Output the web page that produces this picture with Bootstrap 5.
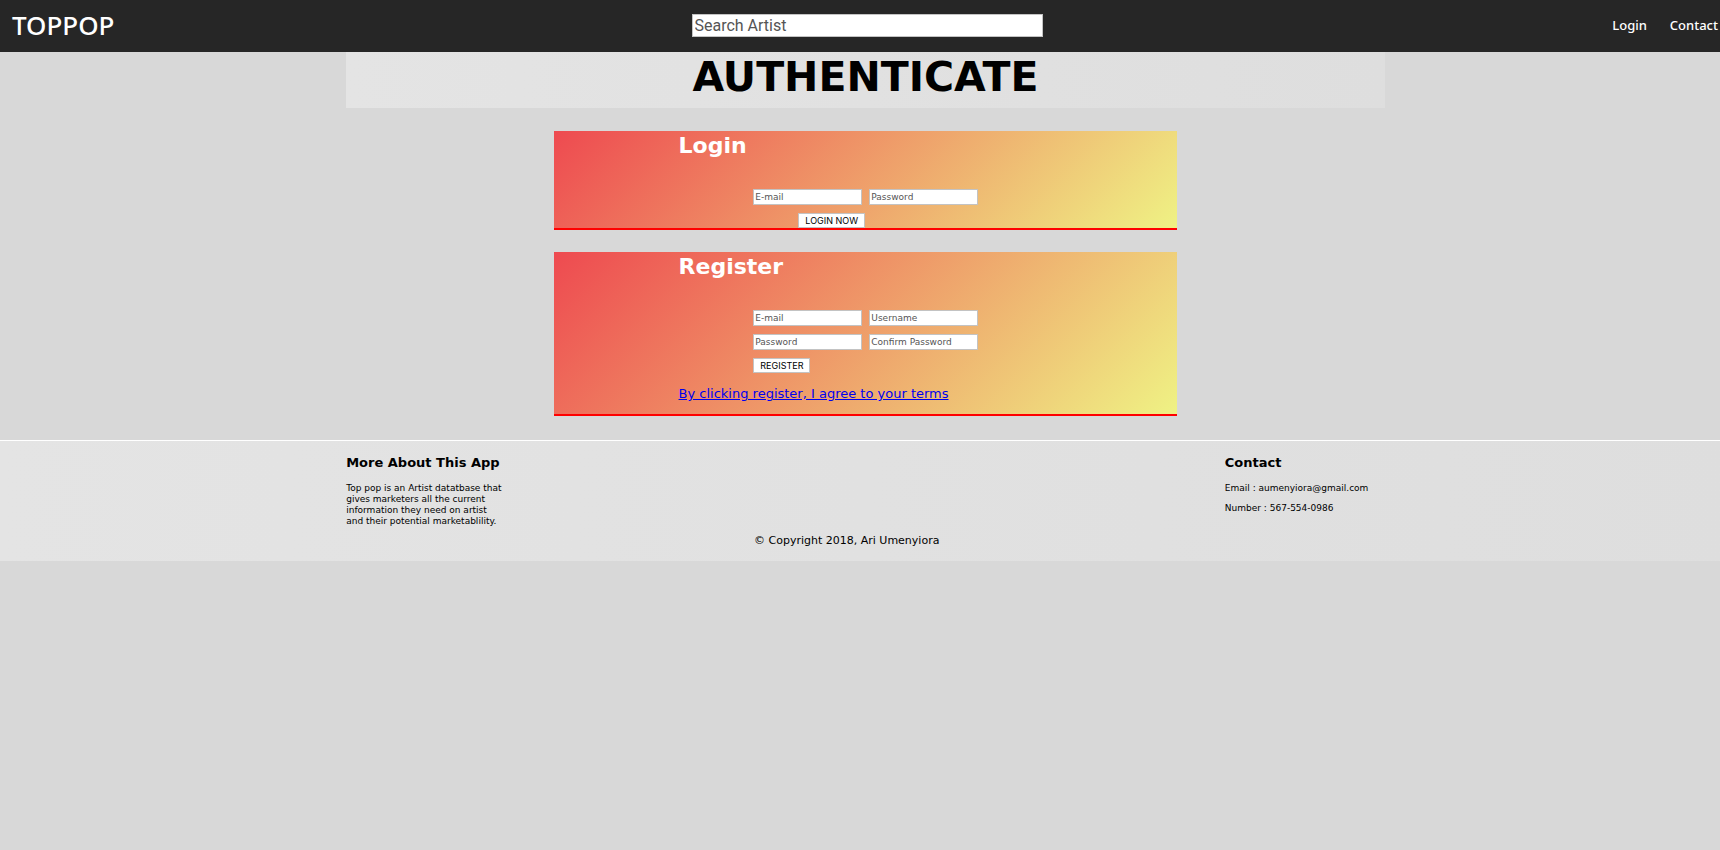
<!DOCTYPE html>
<html lang="en">
<head>
<meta charset="utf-8">
<meta name="viewport" content="width=device-width, initial-scale=1">
<title>TOPPOP</title>
<link href="https://cdn.jsdelivr.net/npm/bootstrap@5.3.0/dist/css/bootstrap.min.css" rel="stylesheet">
<style>
  body { background: #d8d8d8; color: #000; font-family: Verdana, "DejaVu Sans", sans-serif; font-size: 13px; line-height: 16px; overflow-x: hidden; }
  .page-wrap { width: calc(100% + 11px); }
  .top-bar { background: #262626; height: 52px; padding: 0 13px 2px 12px; font-family: Tahoma, "Noto Sans", sans-serif; font-weight: 500; }
  .top-bar a { color: #fff; text-decoration: none; }
  .brand-name { font-size: 26px; line-height: 32px; }
  .top-group { flex: 1 1 0; }
  .top-links { font-size: 13px; gap: 23px; }
  .field { border: 1px solid #c3c3c3; border-radius: 0; background: #fff; padding: 0 2px; min-width: 0; font-family: Roboto, sans-serif; color: #000; }
  .field::placeholder { color: #555; opacity: 1; }
  .search-field { width: 351px; height: 23px; font-size: 16px; margin-left: 4px; }
  .title-band { width: 60%; height: 56px; background: linear-gradient(to right, #e4e4e4, #dedede); }
  .title-band h1 { font-size: 41px; line-height: 51px; font-weight: 700; }
  .auth-list { gap: 22px; padding: 23px 0 24px; }
  .auth-panel { width: 36%; border-bottom: 2px solid #f00; background: linear-gradient(135deg, #ee4a50, #eff284); padding: 0 7.2%; }
  .auth-panel h2 { font-size: 22px; line-height: 30px; font-weight: 700; color: #fff; margin-bottom: 28px; }
  .auth-body { padding-left: 20%; }
  .field-grid { display: grid; grid-template-columns: 109px 109px; gap: 8px 7px; }
  .field-grid .field { height: 16px; font-size: 9px; font-family: "DejaVu Sans", sans-serif; width: 100%; padding: 0 1px; }
  .small-btn { display: block; border: 1px solid #c3c3c3; background: #fff; color: #000; height: 15px; padding: 0 6px; font: 9px/13px Inter, sans-serif; margin-top: 8px; }
  .login-btn { margin-left: 45px; }
  .terms-link { display: block; color: #00e; margin: 13px 0 12px; }
  .site-footer { border-top: 1px solid #fff; background: linear-gradient(to right, #e4e4e4, #dedede); height: 121px; padding: 14px 20% 0; font-size: 9px; line-height: 11px; }
  .site-footer h3 { font-size: 13px; line-height: 16px; font-weight: 700; margin-bottom: 12px; }
  .foot-side { width: 160px; }
  .foot-side p { margin-bottom: 9px; }
  .foot-mid { width: 223px; font-size: 11px; line-height: 14px; padding-top: 79px; }
</style>
</head>
<body>
<div class="page-wrap">
  <nav class="top-bar d-flex align-items-center">
    <div class="top-group"><a class="brand-name" href="#">TOPPOP</a></div>
    <input class="field search-field" type="search" placeholder="Search Artist" aria-label="Search Artist">
    <div class="top-group top-links d-flex justify-content-end"><a href="#login">Login</a><a href="#contact">Contact</a></div>
  </nav>
  <header class="title-band mx-auto text-center">
    <h1 class="m-0">AUTHENTICATE</h1>
  </header>
  <main class="auth-list d-flex flex-column align-items-center">
    <section class="auth-panel" id="login">
      <h2>Login</h2>
      <form class="auth-body">
        <div class="field-grid">
          <input class="field" type="email" placeholder="E-mail" aria-label="E-mail">
          <input class="field" type="password" placeholder="Password" aria-label="Password">
        </div>
        <button class="small-btn login-btn" type="button">LOGIN NOW</button>
      </form>
    </section>
    <section class="auth-panel" id="register">
      <h2>Register</h2>
      <form class="auth-body">
        <div class="field-grid">
          <input class="field" type="email" placeholder="E-mail" aria-label="E-mail">
          <input class="field" type="text" placeholder="Username" aria-label="Username">
          <input class="field" type="password" placeholder="Password" aria-label="Password">
          <input class="field" type="password" placeholder="Confirm Password" aria-label="Confirm Password">
        </div>
        <button class="small-btn" type="button">REGISTER</button>
      </form>
      <a class="terms-link text-nowrap" href="#">By clicking register, I agree to your terms</a>
    </section>
  </main>
  <footer class="site-footer d-flex justify-content-between" id="contact">
    <div class="foot-side">
      <h3 class="text-nowrap">More About This App</h3>
      <p>Top pop is an Artist datatbase that gives marketers all the current information they need on artist and their potential marketablility.</p>
    </div>
    <div class="foot-mid">© Copyright 2018, Ari Umenyiora</div>
    <div class="foot-side">
      <h3>Contact</h3>
      <p>Email : aumenyiora@gmail.com</p>
      <p>Number : 567-554-0986</p>
    </div>
  </footer>
</div>
<script src="https://cdn.jsdelivr.net/npm/bootstrap@5.3.0/dist/js/bootstrap.bundle.min.js"></script>
</body>
</html>
